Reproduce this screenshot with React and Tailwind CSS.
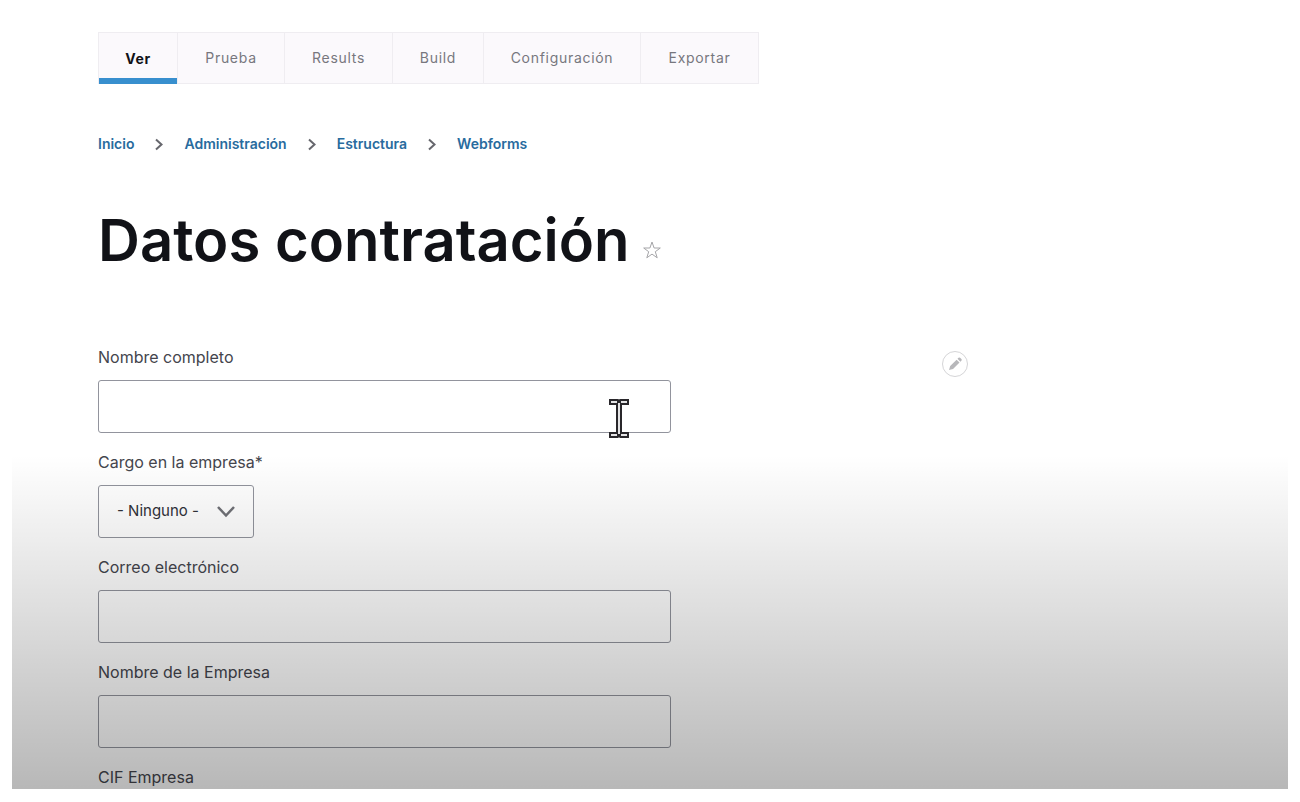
import { useState } from 'react';

const tabs = [
  { name: 'Ver', width: 'w-[79px]' },
  { name: 'Prueba', width: 'w-[107px]' },
  { name: 'Results', width: 'w-[108px]' },
  { name: 'Build', width: 'w-[91px]' },
  { name: 'Configuración', width: 'w-[157px]' },
  { name: 'Exportar', width: 'w-[118px]' },
];

const breadcrumbs = ['Inicio', 'Administración', 'Estructura', 'Webforms'];

function TextField({ id, label }) {
  return (
    <div>
      <label htmlFor={id} className="mb-2.5 block text-base leading-[25px]">{label}</label>
      <input id={id} type="text" className="block h-[53px] w-full rounded-[3px] border border-[#92949d] bg-white px-4 text-base" />
    </div>
  );
}

function StarIcon() {
  return (
    <svg className="size-5" viewBox="0 0 20 20" fill="none" stroke="#a5a5a8" aria-hidden="true">
      <path d="M10 2l2.1 6h6.2l-5 3.7 1.9 6.1-5.2-3.7-5.2 3.7 1.9-6.1-5-3.7h6.2z" />
    </svg>
  );
}

function PencilIcon() {
  return (
    <svg className="size-4" viewBox="0 0 16 16" fill="#b7b7ba" aria-hidden="true">
      <path d="M2 14l1.2-4L9.6 3.7l2.9 2.9L6 12.900zM10.500 2.800l1-1q.8-.8 1.600 0l1.300 1.300q.8.8 0 1.600l-1 1z" />
    </svg>
  );
}

function TextCursor() {
  return (
    <svg className="pointer-events-none absolute right-[42px] bottom-[-6px] h-10 w-5" viewBox="0 0 20 40" fill="none" strokeLinecap="square" aria-hidden="true">
      <path d="M3 3h5l2 1 2-1h5M3 36h5l2-1 2 1h5M10 4v31" stroke="#29272b" strokeWidth="6" />
      <path d="M3 3h4M13 3h4M3 36h4M13 36h4M10 5v29" stroke="#e4e4e5" strokeWidth="2" />
    </svg>
  );
}

export default function App() {
  const [activeTab, setActiveTab] = useState('Ver');

  return (
    <div className="bg-white px-3 py-[13px] font-['Inter',sans-serif] text-[#44454d]">
      <main className="relative px-[86px] pt-[19px]">
        {/* Tabs */}
        <nav aria-label="Tabs" className="flex">
          <div className="flex h-[52px] border border-r-0 border-[#efedf1] bg-[#fbf9fc]">
            {tabs.map((tab) => (
              <button
                key={tab.name}
                type="button"
                onClick={() => setActiveTab(tab.name)}
                className={`${tab.width} border-r border-r-[#efedf1] text-sm tracking-wider ${activeTab === tab.name ? '-mb-px shadow-[inset_0_-6px_#388fce] font-bold text-[#111217]' : 'text-[#77777e]'}`}
              >
                {tab.name}
              </button>
            ))}
          </div>
        </nav>

        {/* Breadcrumb */}
        <nav aria-label="Breadcrumb" className="mt-[50px]">
          <ol className="flex items-center gap-[17px] text-sm leading-5 font-semibold text-[#286b9e]">
            {breadcrumbs.map((name, index) => (
              <li key={name} className="flex items-center gap-[17px]">
                {index > 0 && (
                  <svg className="size-4" viewBox="0 0 16 16" fill="none" stroke="#66676d" strokeWidth="2" aria-hidden="true">
                    <path d="M5 3.500l5.500 5-5.500 5" />
                  </svg>
                )}
                <a href="#">{name}</a>
              </li>
            ))}
          </ol>
        </nav>

        <div className="mt-[50px] flex items-end gap-3">
          <h1 className="text-[58px] leading-[72px] font-semibold text-[#111217]">Datos contratación</h1>
          <button type="button" aria-label="Favorito" className="mb-4">
            <StarIcon />
          </button>
        </div>

        <form className="relative mt-[69px] max-w-[870px]" onSubmit={(e) => e.preventDefault()}>
          <div className="flex max-w-[573px] flex-col gap-[17px]">
            <div className="relative">
              <TextField id="nombre" label="Nombre completo" />
              <TextCursor />
            </div>
            <div>
              <label htmlFor="cargo" className="mb-2.5 block text-base leading-[25px]">Cargo en la empresa*</label>
              <div className="relative w-fit">
                <select id="cargo" className="block h-[53px] w-[156px] appearance-none rounded-[3px] border border-[#92949d] bg-white pl-[18px] text-[15px] text-[#303139]">
                  <option>- Ninguno -</option>
                </select>
                <svg className="pointer-events-none absolute top-[15px] right-4 size-6" viewBox="0 0 24 24" fill="none" stroke="#707177" strokeWidth="2.500" aria-hidden="true">
                  <path d="M4 7l8 8.500L20 7" />
                </svg>
              </div>
            </div>
            <TextField id="correo" label="Correo electrónico" />
            <TextField id="empresa" label="Nombre de la Empresa" />
            <p className="text-base leading-6">CIF Empresa</p>
          </div>
          <button type="button" aria-label="Editar" className="absolute top-1.5 right-0 flex size-[26px] items-center justify-center rounded-full border border-[#d5d5d7] bg-white">
            <PencilIcon />
          </button>
        </form>

        {/* Shade that fades the lower half of the page */}
        <div className="pointer-events-none absolute inset-x-0 bottom-0 h-[334px] bg-linear-to-b from-black/0 to-black/28" />
      </main>
    </div>
  );
}
